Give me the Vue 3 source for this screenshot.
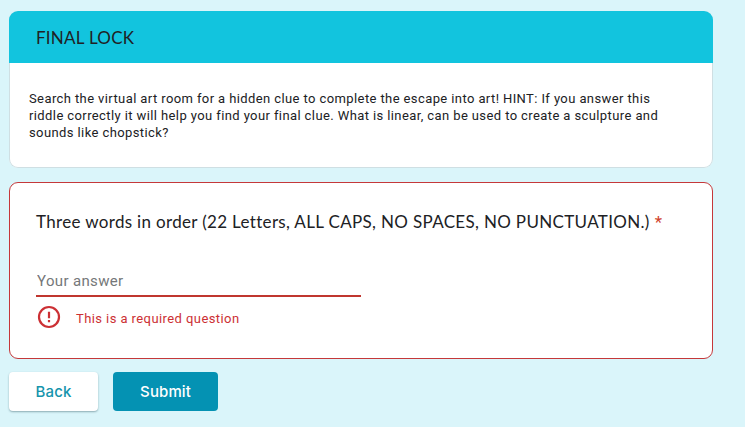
<template>
  <div class="page">

    <!-- SECTION -->
    <section class="card section">
      <h2 class="section-title">FINAL LOCK</h2>

      <p class="description">
        <span>Search the virtual art room for a hidden clue to complete the escape into art! HINT: If you answer this</span><br>
        <span>riddle correctly it will help you find your final clue. What is linear, can be used to create a sculpture and</span><br>
        <span>sounds like chopstick?</span>
      </p>
    </section>

    <!-- QUESTION -->
    <section class="card question" :class="{ invalid: showError }">
      <h3 class="question-title">
        <span>Three words in order (22 Letters, ALL CAPS, NO SPACES, NO PUNCTUATION.)</span>
        <span class="star">*</span>
      </h3>

      <input
        type="text"
        v-model="answer"
        placeholder="Your answer"
      >

      <div class="error" v-if="showError">
        <svg width="24" height="24" viewBox="0 0 24 24">
          <circle cx="12" cy="12" r="10" fill="none" stroke="currentColor" stroke-width="2.2" />
          <path d="M10.9 6.8h2.2v6.4h-2.2zM10.9 15h2.2v2.2h-2.2z" fill="currentColor" />
        </svg>
        <span>This is a required question</span>
      </div>
    </section>

    <!-- BUTTONS -->
    <div class="buttons">
      <button class="back">Back</button>
      <button class="submit" @click="submit">Submit</button>
    </div>

  </div>
</template>

<script setup>
import { ref } from 'vue'

const answer = ref('')
const showError = ref(true)

function submit(){
  showError.value = answer.value.trim() === ''
}
</script>

<style>
body{
  margin:0;
  background:#daf5fa;
}
</style>

<style scoped>
*{
  box-sizing:border-box;
  margin:0;
}

.page{
  height:427px;
  padding:11px 32px 0 9px;
  background:#daf5fa;
  font-family:Roboto, "Liberation Sans", sans-serif;
  color:#202124;
  overflow:hidden;
}

.card{
  width:704px;
  background:white;
  border:1px solid #cfdfe3;
  border-radius:9px;
}

.section{
  height:157px;
  border:none;
  box-shadow:inset 0 0 0 1px #cfdfe3;
}

.section-title{
  height:52px;
  padding-left:27px;
  background:#12c4de;
  border-radius:9px 9px 0 0;
  font-family:Lato, sans-serif;
  font-size:17px;
  font-weight:400;
  line-height:53px;
  letter-spacing:0.25px;
}

.description{
  padding:27px 0 0 20px;
  font-size:13px;
  line-height:17px;
  letter-spacing:0.4px;
  white-space:nowrap;
}

.question{
  height:177px;
  margin-top:14px;
  padding:27px 26px 0;
}

.question.invalid{
  border-color:#c5383a;
}

.question-title{
  display:flex;
  gap:5px;
  font-family:Lato, sans-serif;
  font-size:17px;
  font-weight:400;
  line-height:24px;
  letter-spacing:0.33px;
  white-space:nowrap;
}

.star{
  color:#d0432b;
  font-family:Roboto, sans-serif;
}

input{
  display:block;
  width:325px;
  height:28px;
  margin-top:35px;
  padding:0 0 3px 1px;
  border:none;
  border-bottom:2px solid #c0362f;
  border-radius:0;
  outline:none;
  background:none;
  font-family:Roboto, sans-serif;
  font-size:15px;
  letter-spacing:0.35px;
}

input::placeholder{
  color:#757779;
  opacity:1;
}

.error{
  display:flex;
  align-items:center;
  gap:15px;
  height:24px;
  margin-top:8px;
  padding-left:1px;
  color:#cc3034;
  font-size:13px;
  letter-spacing:0.42px;
}

.error span{
  padding-top:2px;
}

.buttons{
  display:flex;
  gap:15px;
  margin-top:13px;
}

button{
  height:39px;
  padding:0;
  border:none;
  border-radius:4px;
  font-family:Inter, sans-serif;
  font-size:15px;
  font-weight:500;
  letter-spacing:0.1px;
  cursor:pointer;
}

.back{
  width:89px;
  background:white;
  color:#1594ac;
  box-shadow:0 1px 2px rgba(40,80,90,0.45);
}

.submit{
  width:105px;
  background:#0492b3;
  color:white;
}
</style>
